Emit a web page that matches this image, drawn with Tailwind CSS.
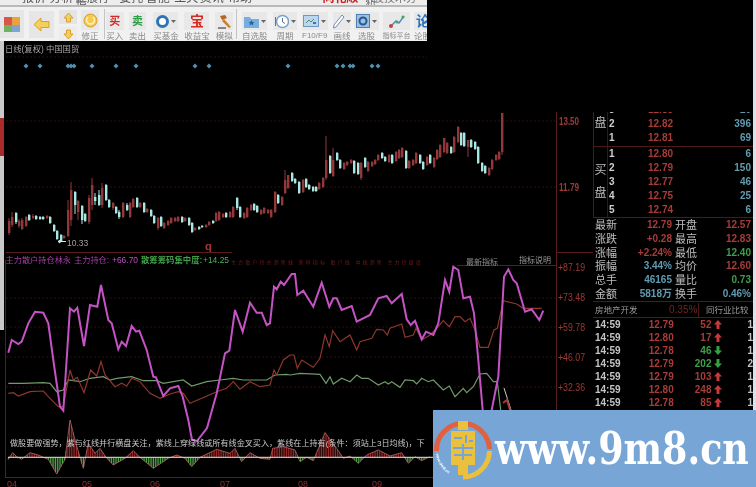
<!DOCTYPE html>
<html lang="en">

<head>
  <meta charset="UTF-8">
  <title>日线 中国国贸</title>
  <script src="https://cdn.jsdelivr.net/npm/@tailwindcss/browser@4"></script>
</head>

<body class="bg-black">
  <div class="relative w-[756px] h-[487px] overflow-hidden bg-black flex blur-[0.4px] [font-family:'Liberation_Sans','Noto_Sans_CJK_SC',sans-serif]">

    <!-- left: toolbar + chart -->
    <div class="w-[593px] shrink-0 flex flex-col">
      <div class="w-[427px] h-[41px] bg-[#f1f1f1] flex flex-col">
        <!-- menu bar, only the bottom of the text is on screen -->
        <div class="h-[5px] overflow-hidden flex text-[12px] leading-[5px] text-[#555] bg-[#ededed] pl-[22px]">
          <span class="w-[28px] -mt-[4px]">报价</span>
          <span class="w-[27px] -mt-[4px]">分析</span>
          <span class="w-[44px] -mt-[4px] text-[11px]">扩展行情</span>
          <span class="w-[27px] -mt-[4px]">委托</span>
          <span class="w-[29px] -mt-[4px]">智能</span>
          <span class="w-[26px] -mt-[4px]">工具</span>
          <span class="w-[29px] -mt-[4px]">资讯</span>
          <span class="w-[96px] -mt-[4px]">帮助</span>
          <span class="w-[44px] -mt-[4px] text-[#c81e1e] font-bold">同花顺</span>
          <span class="-mt-[4px] text-[11px] text-[#777]">A股技术分析</span>
        </div>
        <div class="h-[2px] bg-[#b9b9b9]"></div>
        <div class="flex-1 flex text-[8.5px] leading-[10px] text-[#8a8a8a] overflow-hidden">
          <!-- colour blocks -->
          <div class="w-[24px] h-[28px] mt-[3px] bg-[#e6e6e6] flex items-center justify-center">
            <svg width="16" height="15" viewBox="0 0 16 15">
              <rect width="8" height="8" fill="#d9574a" />
              <rect x="8" width="8" height="8" fill="#e9a23c" />
              <rect y="8" width="8" height="7" fill="#6fb35e" />
              <rect x="8" y="8" width="8" height="7" fill="#7fa5cf" />
            </svg>
          </div>
          <div class="ml-[5px] w-[26px] h-[27px] mt-[4px] bg-[#e6e6e6] flex items-center justify-center">
            <svg width="17" height="15" viewBox="0 0 17 15"><path d="M1 7.500 8 1v3.500h8v6H8V14z" fill="#f5cf5b" stroke="#d9a02c" /></svg>
          </div>
          <div class="ml-[5px] w-[18px] flex flex-col gap-[3px] mt-[3px]">
            <div class="h-[14px] bg-[#e4e4e4] flex items-center justify-center">
              <svg width="11" height="11" viewBox="0 0 11 11"><path d="M5.500 1 10 6H7.500v4h-4V6H1z" fill="#f5cf5b" stroke="#d9a02c" /></svg>
            </div>
            <div class="h-[14px] bg-[#ececec] flex items-center justify-center">
              <svg width="11" height="11" viewBox="0 0 11 11"><path d="M5.500 10 10 5H7.500V1h-4v4H1z" fill="#f5cf5b" stroke="#d9a02c" /></svg>
            </div>
          </div>
          <div class="ml-[4px] w-[18px] flex flex-col items-center">
            <div class="h-[20px] w-full flex items-center justify-center bg-[#e8e8e8] mt-[3px] mb-[1px]">
              <svg width="15" height="15" viewBox="0 0 15 15"><circle cx="7.500" cy="7.500" r="6.500" fill="#f3c94f" stroke="#dca02e" /><path d="M5 4a4 4 0 1 0 5 0" fill="none" stroke="#fff2b8" stroke-width="1.500" /></svg>
            </div>
            <span class="whitespace-nowrap">修正</span>
          </div>
          <div class="ml-[5px] w-px bg-[#c4c4c4] my-[2px]"></div>

          <div class="ml-[1px] w-[18px] flex flex-col items-center">
            <div class="h-[18px] w-full mt-[5px] mb-px flex items-center justify-center bg-[#e8e8e8] text-[11px] font-bold text-[#cf2b2b]">买</div>
            <span class="whitespace-nowrap">买入</span>
          </div>
          <div class="ml-[5px] w-[18px] flex flex-col items-center">
            <div class="h-[18px] w-full mt-[5px] mb-px flex items-center justify-center bg-[#e8e8e8] text-[11px] font-bold text-[#2f9a45]">卖</div>
            <span class="whitespace-nowrap">卖出</span>
          </div>
          <div class="ml-[7px] w-[25px] flex flex-col items-center">
            <div class="h-[18px] w-full mt-[5px] mb-px flex items-center justify-center gap-[2px] bg-[#e8e8e8]">
              <svg width="13" height="13" viewBox="0 0 13 13"><circle cx="6.500" cy="6.500" r="5" fill="#fff" stroke="#2d73b8" stroke-width="3" /></svg>
              <svg width="5" height="3" viewBox="0 0 5 3"><path d="M0 0h5L2.500 3z" fill="#666" /></svg>
            </div>
            <span class="whitespace-nowrap">买基金</span>
          </div>
          <div class="ml-[6px] w-[25px] flex flex-col items-center">
            <div class="h-[18px] w-full mt-[5px] mb-px flex items-center justify-center bg-[#e8e8e8] text-[14px] font-bold text-[#d42a22]">宝</div>
            <span class="whitespace-nowrap">收益宝</span>
          </div>
          <div class="ml-[6px] w-[18px] flex flex-col items-center">
            <div class="h-[18px] w-full mt-[5px] mb-px flex items-center justify-center bg-[#e8e8e8]">
              <svg width="15" height="15" viewBox="0 0 15 15"><path d="M3 2 8 1l2 3-5 2z" fill="#b5651d" /><path d="m7 5 7 8-2 1-7-7z" fill="#c9812e" /><path d="M1 14h8" stroke="#666" stroke-width="1.500" /></svg>
            </div>
            <span class="whitespace-nowrap">模拟</span>
          </div>
          <div class="ml-[3px] w-px bg-[#c4c4c4] my-[2px]"></div>

          <div class="ml-[5px] w-[25px] flex flex-col items-center">
            <div class="h-[18px] w-full mt-[5px] mb-px flex items-center justify-center gap-[2px] bg-[#e8e8e8]">
              <svg width="15" height="13" viewBox="0 0 15 13"><path d="M0 2h6l1 2h8v9H0z" fill="#78aede" /><path d="m7.500 5 1 2h2l-1.600 1.500.6 2-2-1.200-2 1.200.6-2L4.500 7h2z" fill="#24639f" /></svg>
              <svg width="5" height="3" viewBox="0 0 5 3"><path d="M0 0h5L2.500 3z" fill="#666" /></svg>
            </div>
            <span class="whitespace-nowrap">自选股</span>
          </div>
          <div class="ml-[6px] w-[24px] flex flex-col items-center">
            <div class="h-[18px] w-full mt-[5px] mb-px flex items-center justify-center gap-[2px] bg-[#e8e8e8]">
              <svg width="15" height="15" viewBox="0 0 15 15"><circle cx="8.500" cy="7.500" r="6" fill="#fff" stroke="#7da0c4" stroke-width="1.500" /><path d="M8.500 4v4l2.500 1.500M1.500 3v9" fill="none" stroke="#55799e" /></svg>
              <svg width="5" height="3" viewBox="0 0 5 3"><path d="M0 0h5L2.500 3z" fill="#666" /></svg>
            </div>
            <span class="whitespace-nowrap">周期</span>
          </div>
          <div class="ml-[5px] w-[26px] flex flex-col items-center">
            <div class="h-[18px] w-full mt-[5px] mb-px flex items-center justify-center gap-[2px] bg-[#e8e8e8]">
              <svg width="16" height="12" viewBox="0 0 16 12"><rect x=".5" y=".5" width="15" height="11" fill="#bcd6ef" stroke="#6e98c2" /><path d="M3 8l3-3 2 2 3-3" fill="none" stroke="#4d8f63" /><path d="M10 8h3" stroke="#3d74ad" stroke-width="2" /></svg>
              <svg width="5" height="3" viewBox="0 0 5 3"><path d="M0 0h5L2.500 3z" fill="#666" /></svg>
            </div>
            <span class="whitespace-nowrap text-[8px]">F10/F9</span>
          </div>
          <div class="ml-[5px] w-[19px] flex flex-col items-center">
            <div class="h-[18px] w-full mt-[5px] mb-px flex items-center justify-center gap-[1px] bg-[#e8e8e8]">
              <svg width="12" height="15" viewBox="0 0 12 15"><path d="M9 1 11 3 3 13 .5 14 1 11z" fill="#fff" stroke="#6e90b5" /></svg>
              <svg width="5" height="3" viewBox="0 0 5 3"><path d="M0 0h5L2.500 3z" fill="#666" /></svg>
            </div>
            <span class="whitespace-nowrap">画线</span>
          </div>
          <div class="ml-[3px] w-[25px] flex flex-col items-center">
            <div class="h-[18px] w-full mt-[5px] mb-px flex items-center justify-center gap-[2px] bg-[#e8e8e8]">
              <svg width="14" height="14" viewBox="0 0 14 14"><rect x=".5" y=".5" width="13" height="13" fill="#9fbfe0" stroke="#4f7fae" /><circle cx="7" cy="7" r="3.500" fill="none" stroke="#1f5a96" stroke-width="2" /></svg>
              <svg width="5" height="3" viewBox="0 0 5 3"><path d="M0 0h5L2.500 3z" fill="#666" /></svg>
            </div>
            <span class="whitespace-nowrap">选股</span>
          </div>
          <div class="ml-[4px] w-[27px] flex flex-col items-center">
            <div class="h-[18px] w-full mt-[5px] mb-px flex items-center justify-center bg-[#e8e8e8]">
              <svg width="17" height="15" viewBox="0 0 17 15"><path d="M2 13 8 7l3 2 5-7" fill="none" stroke="#4f8fc0" stroke-width="1.500" /><circle cx="3" cy="12" r="2" fill="#c8403c" /><circle cx="9" cy="8" r="1.500" fill="#4aa65a" /><circle cx="15" cy="3" r="1.500" fill="#4aa65a" /></svg>
            </div>
            <span class="whitespace-nowrap text-[7px]">指标平台</span>
          </div>
          <div class="ml-[4px] w-[13px] flex flex-col items-start">
            <div class="h-[18px] w-full mt-[5px] mb-px flex items-center pl-[2px] bg-[#e8e8e8] text-[14px] font-bold text-[#2d73b8] whitespace-nowrap">论</div>
            <span class="whitespace-nowrap">论股</span>
          </div>
        </div>
      </div>

      <!-- chart, drawn in page coordinates -->
      <div class="relative flex-1">
        <div class="absolute left-0 top-0 w-[4px] h-[289px] bg-[#c9c9c9] flex flex-col">
          <div class="h-[77px]"></div>
          <div class="h-[38px] bg-[#a82a2a]"></div>
        </div>
        <svg class="absolute inset-0" width="593" height="446" viewBox="0 41 593 446">
          <g stroke="#2e1010" stroke-dasharray="2 2">
            <line x1="6" y1="57" x2="427" y2="57" />
            <line x1="6" y1="121" x2="556" y2="121" />
            <line x1="6" y1="187" x2="556" y2="187" />
            <line x1="6" y1="298" x2="556" y2="298" />
            <line x1="6" y1="327" x2="556" y2="327" />
            <line x1="6" y1="357" x2="556" y2="357" />
            <line x1="6" y1="387" x2="556" y2="387" />
          </g>
          <g stroke="#5c1c1c">
            <line x1="5.500" y1="260" x2="5.500" y2="478" />
            <line x1="556.500" y1="112" x2="556.500" y2="410" />
            <line x1="6" y1="252.500" x2="232" y2="252.500" />
            <line x1="557" y1="252.500" x2="593" y2="252.500" />
            <line x1="457" y1="265.500" x2="557" y2="265.500" />
            <line x1="5" y1="477.500" x2="433" y2="477.500" />
          </g>

          <g id="diamonds" fill="#4f8fb0"></g>
          <g id="candles"></g>
          <g id="hist"></g>
          <polyline id="lineGreen" fill="none" stroke="#6f9a6a" stroke-width="1.200" />
          <polyline id="lineRed" fill="none" stroke="#8f362d" stroke-width="1.200" />
          <polyline id="linePurple" fill="none" stroke="#c653c6" stroke-width="2" />
          <polyline points="504,388 511,410" fill="none" stroke="#cfcfcf" />
          <polyline points="503,403 507,400 510,410" fill="none" stroke="#a83a30" stroke-width="2" />

          <g>
            <text x="5" y="52" fill="#a8a8a8" font-size="8.300">日线(复权) 中国国贸</text>
            <text x="67" y="245.500" fill="#a0a0a0" font-size="8.500">10.33</text>
            <path d="M58 241.500h8M58 241.500l2-1.500v3z" stroke="#ddd" fill="#ddd" />
            <text x="205" y="250" fill="#a33" font-size="11" font-weight="bold">q</text>
            <text x="559" y="124.500" fill="#a03a36" font-size="10" font-weight="bold" textLength="20" lengthAdjust="spacingAndGlyphs">13.50</text>
            <text x="559" y="190.500" fill="#a03a36" font-size="10" font-weight="bold" textLength="20" lengthAdjust="spacingAndGlyphs">11.79</text>
            <text x="558" y="271" fill="#9c3a36" font-size="10" textLength="27" lengthAdjust="spacingAndGlyphs">+87.19</text>
            <text x="558" y="301" fill="#9c3a36" font-size="10" textLength="27" lengthAdjust="spacingAndGlyphs">+73.48</text>
            <text x="558" y="331" fill="#9c3a36" font-size="10" textLength="27" lengthAdjust="spacingAndGlyphs">+59.78</text>
            <text x="558" y="361" fill="#9c3a36" font-size="10" textLength="27" lengthAdjust="spacingAndGlyphs">+46.07</text>
            <text x="558" y="391" fill="#9c3a36" font-size="10" textLength="27" lengthAdjust="spacingAndGlyphs">+32.36</text>

            <text x="5.500" y="263" fill="#a63ea6" font-size="8.200">主力散户持仓林永</text>
            <text x="74" y="263" fill="#a63ea6" font-size="8.200">主力持仓:</text>
            <text x="112" y="263" fill="#c050c0" font-size="9" textLength="26" lengthAdjust="spacingAndGlyphs">+66.70</text>
            <text x="141" y="263" fill="#3f9e48" font-size="8.400" font-weight="bold">散筹筹码集中度:</text>
            <text x="203" y="263" fill="#4fb05a" font-size="9" textLength="26" lengthAdjust="spacingAndGlyphs">+14.25</text>
            <text x="231" y="264" fill="#6a1c1c" font-size="5" textLength="190" lengthAdjust="spacing">主力散户持仓趋势线 筹码指标 散户线 中线趋势 主力控盘度</text>
            <text x="466" y="265" fill="#8f8f8f" font-size="8">最新指标</text>
            <text x="519" y="263" fill="#9a9a9a" font-size="8">指标说明</text>

            <text x="10" y="446" fill="#c9c9c9" font-size="8.100">做股要做强势，紫与红线并行横盘关注，紫线上穿绿线或所有线金叉买入，紫线在上持有(条件：须站上3日均线)，下</text>

            <g fill="#8a3030" font-size="9">
              <text x="7" y="487">04</text>
              <text x="82" y="487">05</text>
              <text x="150" y="487">06</text>
              <text x="220" y="487">07</text>
              <text x="298" y="487">08</text>
              <text x="372" y="487">09</text>
            </g>
          </g>
        </svg>
      </div>
    </div>

    <!-- right: quote panel -->
    <div class="w-[163px] shrink-0 h-[410px] flex flex-col pt-[112px] border-r-[3px] border-[#d8e2ec] font-bold text-[10px] leading-[14px]">
      <div class="h-[34px] flex border-l border-[#4d1a1a] overflow-hidden">
        <div class="w-[14px] pt-[4px] text-[12px] font-normal text-[#bdbdbd] leading-[14px] border-r border-[#3d1515] text-center">盘</div>
        <div class="flex-1 flex flex-col justify-end pb-px">
          <div class="h-[14px] shrink-0 flex pl-[1px] pr-[2px] text-[#cfcfcf]"><span class="w-[39px]">3</span><span class="w-[40px] text-[#a83c38]">12.83</span><span class="flex-1 text-right text-[#5f9bb0]">20</span></div>
          <div class="h-[14px] shrink-0 flex pl-[1px] pr-[2px] text-[#cfcfcf]"><span class="w-[39px]">2</span><span class="w-[40px] text-[#a83c38]">12.82</span><span class="flex-1 text-right text-[#5f9bb0]">396</span></div>
          <div class="h-[14px] shrink-0 flex pl-[1px] pr-[2px] text-[#cfcfcf]"><span class="w-[39px]">1</span><span class="w-[40px] text-[#a83c38]">12.81</span><span class="flex-1 text-right text-[#5f9bb0]">69</span></div>
        </div>
      </div>
      <div class="h-[72px] flex border-l border-t border-b border-[#4d1a1a]">
        <div class="w-[14px] pt-[12px] text-[12px] font-normal text-[#bdbdbd] leading-[23px] border-r border-[#3d1515] text-center">买<br>盘</div>
        <div class="flex-1 flex flex-col">
          <div class="h-[14px] flex pl-[1px] pr-[2px] text-[#cfcfcf]"><span class="w-[39px]">1</span><span class="w-[40px] text-[#a83c38]">12.80</span><span class="flex-1 text-right text-[#5f9bb0]">6</span></div>
          <div class="h-[14px] flex pl-[1px] pr-[2px] text-[#cfcfcf]"><span class="w-[39px]">2</span><span class="w-[40px] text-[#a83c38]">12.79</span><span class="flex-1 text-right text-[#5f9bb0]">150</span></div>
          <div class="h-[14px] flex pl-[1px] pr-[2px] text-[#cfcfcf]"><span class="w-[39px]">3</span><span class="w-[40px] text-[#a83c38]">12.77</span><span class="flex-1 text-right text-[#5f9bb0]">46</span></div>
          <div class="h-[14px] flex pl-[1px] pr-[2px] text-[#cfcfcf]"><span class="w-[39px]">4</span><span class="w-[40px] text-[#a83c38]">12.75</span><span class="flex-1 text-right text-[#5f9bb0]">25</span></div>
          <div class="h-[14px] flex pl-[1px] pr-[2px] text-[#cfcfcf]"><span class="w-[39px]">5</span><span class="w-[40px] text-[#a83c38]">12.74</span><span class="flex-1 text-right text-[#5f9bb0]">6</span></div>
        </div>
      </div>
      <div class="h-[84px] grid grid-cols-[77px_1fr] gap-x-[3px] grid-rows-6 border-b border-[#4d1a1a] pl-[2px] pr-[2px]">
        <div class="flex justify-between"><span class="text-[11px] font-normal text-[#bdbdbd]">最新</span><span class="text-[#a83c38]">12.79</span></div>
        <div class="flex justify-between"><span class="text-[11px] font-normal text-[#bdbdbd]">开盘</span><span class="text-[#a83c38]">12.57</span></div>
        <div class="flex justify-between"><span class="text-[11px] font-normal text-[#bdbdbd]">涨跌</span><span class="text-[#a83c38]">+0.28</span></div>
        <div class="flex justify-between"><span class="text-[11px] font-normal text-[#bdbdbd]">最高</span><span class="text-[#a83c38]">12.83</span></div>
        <div class="flex justify-between"><span class="text-[11px] font-normal text-[#bdbdbd]">涨幅</span><span class="text-[#a83c38]">+2.24%</span></div>
        <div class="flex justify-between"><span class="text-[11px] font-normal text-[#bdbdbd]">最低</span><span class="text-[#3f9e48]">12.40</span></div>
        <div class="flex justify-between"><span class="text-[11px] font-normal text-[#bdbdbd]">振幅</span><span class="text-[#5f9bb0]">3.44%</span></div>
        <div class="flex justify-between"><span class="text-[11px] font-normal text-[#bdbdbd]">均价</span><span class="text-[#a83c38]">12.60</span></div>
        <div class="flex justify-between"><span class="text-[11px] font-normal text-[#bdbdbd]">总手</span><span class="text-[#5f9bb0]">46165</span></div>
        <div class="flex justify-between"><span class="text-[11px] font-normal text-[#bdbdbd]">量比</span><span class="text-[#3f9e48]">0.73</span></div>
        <div class="flex justify-between"><span class="text-[11px] font-normal text-[#bdbdbd]">金额</span><span class="text-[#5f9bb0]">5818万</span></div>
        <div class="flex justify-between"><span class="text-[11px] font-normal text-[#bdbdbd]">换手</span><span class="text-[#5f9bb0]">0.46%</span></div>
      </div>
      <div class="h-[16px] flex items-center border-b border-[#4d1a1a] pl-[2px] font-normal text-[8.500px] whitespace-nowrap">
        <span class="w-[74px] text-[#9a9a9a]">房地产开发</span>
        <span class="w-[29px] text-[10px] text-[#6e2620]">0.35%</span>
        <span class="border-l border-[#4d1a1a] pl-[7px] text-[#9a9a9a]">同行业比较</span>
      </div>
      <div class="flex-1 flex flex-col overflow-hidden">
        <div class="h-[13px] shrink-0 flex items-center pl-[2px] text-[#c4c4c4]"><span class="w-[54px]">14:59</span><span class="w-[24px] text-[#a83c38]">12.79</span><span class="w-[39px] text-right text-[#a83c38]">52</span><svg class="ml-[3px]" width="8" height="9" viewBox="0 0 8 9"><path d="M4 0l4 4.500H5.500V9h-3V4.500H0z" fill="#c8393a" /></svg><span class="ml-[25px]">1</span></div>
        <div class="h-[13px] shrink-0 flex items-center pl-[2px] text-[#c4c4c4]"><span class="w-[54px]">14:59</span><span class="w-[24px] text-[#a83c38]">12.80</span><span class="w-[39px] text-right text-[#a83c38]">17</span><svg class="ml-[3px]" width="8" height="9" viewBox="0 0 8 9"><path d="M4 0l4 4.500H5.500V9h-3V4.500H0z" fill="#c8393a" /></svg><span class="ml-[25px]">1</span></div>
        <div class="h-[13px] shrink-0 flex items-center pl-[2px] text-[#c4c4c4]"><span class="w-[54px]">14:59</span><span class="w-[24px] text-[#a83c38]">12.78</span><span class="w-[39px] text-right text-[#3f9e48]">46</span><svg class="ml-[3px]" width="8" height="9" viewBox="0 0 8 9"><path d="M4 9l4-4.500H5.500V0h-3v4.500H0z" fill="#35a045" /></svg><span class="ml-[25px]">1</span></div>
        <div class="h-[13px] shrink-0 flex items-center pl-[2px] text-[#c4c4c4]"><span class="w-[54px]">14:59</span><span class="w-[24px] text-[#a83c38]">12.79</span><span class="w-[39px] text-right text-[#3f9e48]">202</span><svg class="ml-[3px]" width="8" height="9" viewBox="0 0 8 9"><path d="M4 9l4-4.500H5.500V0h-3v4.500H0z" fill="#35a045" /></svg><span class="ml-[25px]">2</span></div>
        <div class="h-[13px] shrink-0 flex items-center pl-[2px] text-[#c4c4c4]"><span class="w-[54px]">14:59</span><span class="w-[24px] text-[#a83c38]">12.79</span><span class="w-[39px] text-right text-[#a83c38]">103</span><svg class="ml-[3px]" width="8" height="9" viewBox="0 0 8 9"><path d="M4 0l4 4.500H5.500V9h-3V4.500H0z" fill="#c8393a" /></svg><span class="ml-[25px]">1</span></div>
        <div class="h-[13px] shrink-0 flex items-center pl-[2px] text-[#c4c4c4]"><span class="w-[54px]">14:59</span><span class="w-[24px] text-[#a83c38]">12.80</span><span class="w-[39px] text-right text-[#a83c38]">248</span><svg class="ml-[3px]" width="8" height="9" viewBox="0 0 8 9"><path d="M4 0l4 4.500H5.500V9h-3V4.500H0z" fill="#c8393a" /></svg><span class="ml-[25px]">1</span></div>
        <div class="h-[13px] shrink-0 flex items-center pl-[2px] text-[#c4c4c4]"><span class="w-[54px]">14:59</span><span class="w-[24px] text-[#a83c38]">12.78</span><span class="w-[39px] text-right text-[#a83c38]">85</span><svg class="ml-[3px]" width="8" height="9" viewBox="0 0 8 9"><path d="M4 0l4 4.500H5.500V9h-3V4.500H0z" fill="#c8393a" /></svg><span class="ml-[25px]">1</span></div>
      </div>
    </div>

    <!-- watermark lies over the page -->
    <div class="absolute left-[433px] top-[410px] w-[323px] h-[77px] bg-[#76a5d6] flex items-center overflow-hidden">
      <svg class="shrink-0 mt-[3px]" width="60" height="60" viewBox="0 0 60 60">
        <defs>
          <path id="logoArc" d="M3 34A27 27 0 0 0 25 57" />
        </defs>
        <path d="M3.500 31A26.500 26.500 0 0 1 56.500 29" fill="none" stroke="#e0603f" stroke-width="5" />
        <path d="M56.500 31A26.500 26.500 0 0 1 30 57" fill="none" stroke="#ebc03c" stroke-width="5" />
        <text font-size="4" font-weight="bold" fill="#fff"><textPath href="#logoArc">www.9m8.cn</textPath></text>
        <rect x="25" y="1" width="10" height="9" fill="#ebc03c" />
        <path d="M18 11h24v34h-7v10h-10V45h-7z" fill="#ebc03c" />
        <path d="M21 17h8v2h-8zM32 15h2v8h-2zM36 20h4v2h-4zM20 27h20v2H20zM21 34h18v2H21zM29 24h2v16h-2z" fill="#76a5d6" />
      </svg>
      <span class="ml-[2px] shrink-0 text-[45px] leading-none font-bold origin-left scale-x-[0.81] text-white whitespace-nowrap [font-family:'DejaVu_Serif',serif]">www.9m8.cn</span>
    </div>
  </div>

  <script>
    document.addEventListener("DOMContentLoaded", () => {
      // buy/sell signals along the top of the chart
      const signals = [26, 40, 68, 71, 74, 92, 116, 136, 195, 209, 288, 337, 343, 350, 353, 372, 378];
      document.getElementById("diamonds").innerHTML = signals
        .map((x) => `<path d="M${x} 63.500l2.500 2.500-2.500 2.500-2.500-2.500z" />`)
        .join("");

      // x, body top, body bottom, wick top, wick bottom, r/c
      const candles = [
        [8,221,233,218,235,"r"],[11,217,225,212,227,"r"],[15,213,222,212,224,"c"],[18,221,226,219,228,"r"],[21,220,229,218,230,"r"],[25,217,226,216,227,"r"],
        [28,215,220,214,221,"c"],[32,216,218,214,219,"r"],[35,216,219,215,220,"c"],[39,217,219,216,220,"c"],[42,217,219,216,220,"c"],[46,216,218,215,219,"r"],
        [49,217,223,216,224,"c"],[53,225,231,224,232,"c"],[56,231,239,230,240,"c"],[60,235,241,234,242,"c"],[63,236,238,235,239,"r"],[67,210,236,200,237,"r"],
        [70,190,220,182,226,"r"],[74,192,205,191,214,"c"],[77,201,212,200,220,"r"],[81,206,220,205,224,"c"],[84,214,221,213,222,"c"],[88,198,222,195,224,"r"],
        [91,185,205,178,210,"r"],[94,197,201,193,205,"c"],[98,195,205,190,206,"c"],[101,188,205,183,208,"r"],[105,185,200,184,201,"c"],[108,200,207,199,208,"c"],
        [112,203,208,202,210,"r"],[115,207,213,206,214,"c"],[118,212,217,210,219,"c"],[122,203,217,202,218,"r"],[126,205,210,203,211,"c"],[129,203,217,202,218,"r"],
        [132,199,207,198,208,"r"],[136,198,207,197,208,"c"],[139,203,207,202,208,"r"],[143,203,212,202,213,"c"],[146,209,212,208,213,"r"],[150,210,216,209,217,"c"],
        [153,216,223,215,224,"c"],[157,218,228,217,230,"r"],[160,217,226,216,227,"c"],[163,223,228,222,229,"r"],[167,221,225,220,226,"r"],[170,218,223,217,224,"r"],
        [174,218,221,217,222,"r"],[177,217,221,216,222,"r"],[181,217,222,216,223,"c"],[184,218,221,217,222,"r"],[188,218,225,217,226,"c"],[191,223,232,222,233,"c"],
        [194,228,230,227,231,"r"],[198,227,229,226,230,"c"],[201,226,227,225,228,"c"],[205,225,227,224,228,"r"],[208,222,225,221,226,"r"],[212,221,223,220,224,"c"],
        [215,213,221,212,222,"r"],[218,212,220,211,221,"r"],[222,214,217,213,218,"r"],[225,213,217,212,218,"c"],[229,212,217,211,218,"r"],[232,207,217,206,218,"r"],
        [236,198,208,197,210,"c"],[239,207,217,206,218,"c"],[243,213,218,212,219,"r"],[246,208,217,207,218,"r"],[250,205,210,204,211,"r"],[253,204,210,203,211,"c"],
        [256,206,212,205,213,"c"],[260,210,214,209,215,"r"],[263,208,213,207,214,"r"],[267,210,213,209,214,"r"],[270,210,217,209,218,"r"],[274,192,212,191,213,"r"],
        [277,195,203,194,204,"c"],[281,197,205,196,206,"r"],[284,180,193,170,194,"r"],[287,175,188,175,189,"r"],[291,173,181,172,182,"c"],[294,179,183,178,184,"c"],
        [298,182,193,181,194,"c"],[302,180,192,179,193,"r"],[305,179,187,178,188,"c"],[308,185,189,184,190,"c"],[312,187,191,186,192,"c"],[315,187,191,186,192,"c"],
        [318,183,189,182,190,"r"],[322,178,187,177,188,"r"],[325,160,178,136,180,"r"],[329,156,173,155,174,"c"],[332,160,176,148,177,"r"],[336,153,160,152,161,"c"],
        [339,160,168,159,169,"c"],[343,163,169,162,170,"r"],[346,162,165,161,166,"r"],[350,160,163,159,164,"r"],[353,161,173,160,174,"c"],[357,163,174,162,175,"c"],
        [360,163,178,162,180,"r"],[364,158,167,157,168,"c"],[367,162,171,161,172,"r"],[371,162,166,161,167,"r"],[374,160,164,159,165,"r"],[377,155,160,154,161,"r"],
        [381,153,158,152,159,"c"],[384,157,161,156,162,"c"],[388,155,162,154,163,"r"],[391,155,163,154,164,"c"],[395,152,161,151,162,"r"],[398,150,158,149,159,"r"],
        [401,148,157,147,158,"r"],[405,151,168,150,169,"c"],[408,161,168,160,169,"r"],[412,160,165,159,166,"r"],[415,153,163,152,164,"r"],[419,155,163,154,164,"c"],
        [422,162,169,161,170,"c"],[426,157,165,156,166,"r"],[429,155,163,154,164,"c"],[433,158,167,157,168,"r"],[436,150,159,149,160,"r"],[439,145,157,144,158,"r"],
        [443,138,152,138,153,"r"],[446,143,153,142,154,"r"],[450,147,153,146,154,"c"],[453,137,152,136,153,"r"],[457,127,142,126,143,"r"],[460,133,145,132,146,"c"],
        [463,133,146,132,147,"c"],[467,140,147,140,157,"r"],[470,140,147,139,148,"c"],[474,142,149,141,150,"c"],[477,147,163,146,164,"c"],[481,163,171,162,172,"c"],
        [484,166,173,165,174,"c"],[488,168,175,167,176,"r"],[491,160,169,159,170,"r"],[495,155,160,154,161,"r"],[498,152,159,151,160,"r"],[501,113,152,113,155,"r"],
      ];
      const colors = { r: "#93383a", c: "#a9e8e2" };
      document.getElementById("candles").innerHTML = candles
        .map(([x, top, bot, wt, wb, c]) =>
          `<line x1="${x + 1}" x2="${x + 1}" y1="${wt}" y2="${wb}" stroke="${colors[c]}" /><rect x="${x}" y="${top}" width="2.400" height="${bot - top}" fill="${colors[c]}" />`)
        .join("");

      // points were read off crops: zoomed x/3 + ox, y/3 + oy
      const toPts = (list, ox, oy) => list.map(([x, y]) => `${(x / 3 + ox).toFixed(1)},${(y / 3 + oy).toFixed(1)}`).join(" ");

      const purple = toPts([[25,278],[35,240],[55,252],[65,245],[85,190],[105,155],[130,158],[145,190],[160,300],[180,440],[190,452],[210,145],[222,155],[232,143],[252,258],[270,135],[292,140],[303,75],[325,180],[335,190],[355,268],[365,245],[378,258],[395,198],[408,215],[418,212],[440,270],[460,350],[468,352],[490,408],[510,385],[535,378],[548,410],[565,480]], 0, 260)
        + " 192,440 197,441 207,428 "
        + toPts([[650,400],[675,280],[688,272],[705,150],[728,215],[750,128],[770,158],[785,158],[800,195],[810,190],[822,80],[830,88],[842,65],[852,75],[875,42],[885,42]], 0, 260) + " "
        + toPts([[22,105],[40,92],[70,140],[95,68],[118,140],[130,115],[140,115],[155,150],[185,138],[200,185],[240,165],[265,115],[290,108],[305,130],[335,102],[350,178],[362,195],[375,182],[395,238],[408,215],[430,225],[445,190],[465,60],[478,95],[490,20],[505,30],[520,115],[540,110],[552,160],[565,300],[578,450],[590,480],[605,450],[625,350],[642,50],[655,28],[670,60],[680,70],[705,155],[725,148],[748,180],[760,152]], 290, 260);
      document.getElementById("linePurple").setAttribute("points", purple);

      const red = toPts([[25,400],[40,398],[55,408],[90,395],[130,393],[145,410],[175,440],[190,440],[210,330],[220,360],[232,352],[252,398],[272,330],[290,348],[303,305],[315,345],[345,380],[365,370],[380,378],[395,355],[420,365],[450,400],[480,415],[510,402],[535,395],[550,400],[570,430],[650,395],[680,385],[700,365],[720,388],[750,365],[780,380],[810,375],[822,330],[830,345],[850,300],[870,285]], 0, 260) + " "
        + toPts([[0,285],[12,285],[22,325],[35,300],[70,322],[90,295],[105,225],[118,260],[128,212],[150,245],[180,225],[200,270],[210,245],[245,235],[260,208],[280,210],[292,225],[300,205],[335,192],[345,232],[370,225],[378,205],[395,240],[420,225],[440,205],[460,182],[478,200],[495,170],[510,170],[525,185],[540,175],[555,210],[570,262],[595,262],[612,210],[622,205],[640,122],[680,132],[700,145],[730,145],[755,145]], 290, 260);
      document.getElementById("lineRed").setAttribute("points", red);

      const green = toPts([[25,370],[70,370],[130,368],[150,370],[170,395],[190,390],[205,360],[240,365],[270,355],[310,350],[330,360],[350,355],[395,350],[430,362],[470,362],[490,370],[550,360],[575,378],[620,365],[660,360],[700,355],[730,360],[800,360],[825,345],[860,343]], 0, 260) + " "
        + toPts([[0,345],[30,340],[90,343],[108,370],[120,350],[130,372],[155,355],[180,365],[200,345],[215,355],[235,355],[265,375],[285,365],[295,372],[305,365],[330,382],[345,360],[370,362],[380,372],[395,355],[415,365],[430,360],[460,390],[478,378],[495,410],[520,385],[530,398],[550,380],[570,342],[590,340],[610,365],[622,365],[632,450]], 290, 260);
      document.getElementById("lineGreen").setAttribute("points", green);

      // histogram under the text: hatched bars around the baseline
      const baseY = 457.3;
      const env = [[25,178],[38,158],[50,170],[65,178],[90,158],[115,165],[130,172],[145,178],[170,222],[195,178],[210,60],[225,120],[240,172],[250,205],[265,130],[285,160],[300,145],[318,172],[340,195],[375,175],[400,152],[420,172],[460,205],[505,175],[530,165],[555,175],[575,200],[600,172],[650,148],[690,160],[705,145],[725,185],[750,158],[780,175],[810,178],[818,145],[850,140],[885,150],[900,185],[920,172],[940,182],[975,98],[1010,145],[1030,175],[1050,168],[1075,190],[1100,165],[1135,150],[1170,168],[1205,158],[1225,190],[1245,170],[1265,182],[1290,170]]
        .map(([x, y]) => [x / 3, y / 3 + 400]);
      const envAt = (x) => {
        for (let i = 1; i < env.length; i++) {
          if (x <= env[i][0]) {
            const [x0, y0] = env[i - 1];
            const [x1, y1] = env[i];
            return y0 + ((y1 - y0) * (x - x0)) / (x1 - x0);
          }
        }
        return baseY;
      };
      let bars = "";
      for (let x = env[0][0]; x < 433; x += 1.75) {
        const y = envAt(x);
        bars += `<line x1="${x}" x2="${x}" y1="${baseY}" y2="${y}" stroke="${y < baseY ? "#a52b2b" : "#55b04f"}" stroke-width="1" />`;
      }
      bars += `<polyline points="${env.map((p) => p.join(",")).join(" ")}" fill="none" stroke="#b56a6a" stroke-width=".8" />`;
      bars += `<line x1="8" x2="433" y1="${baseY}" y2="${baseY}" stroke="#e6e6e6" />`;
      document.getElementById("hist").innerHTML = bars;
    });
  </script>
</body>

</html>
